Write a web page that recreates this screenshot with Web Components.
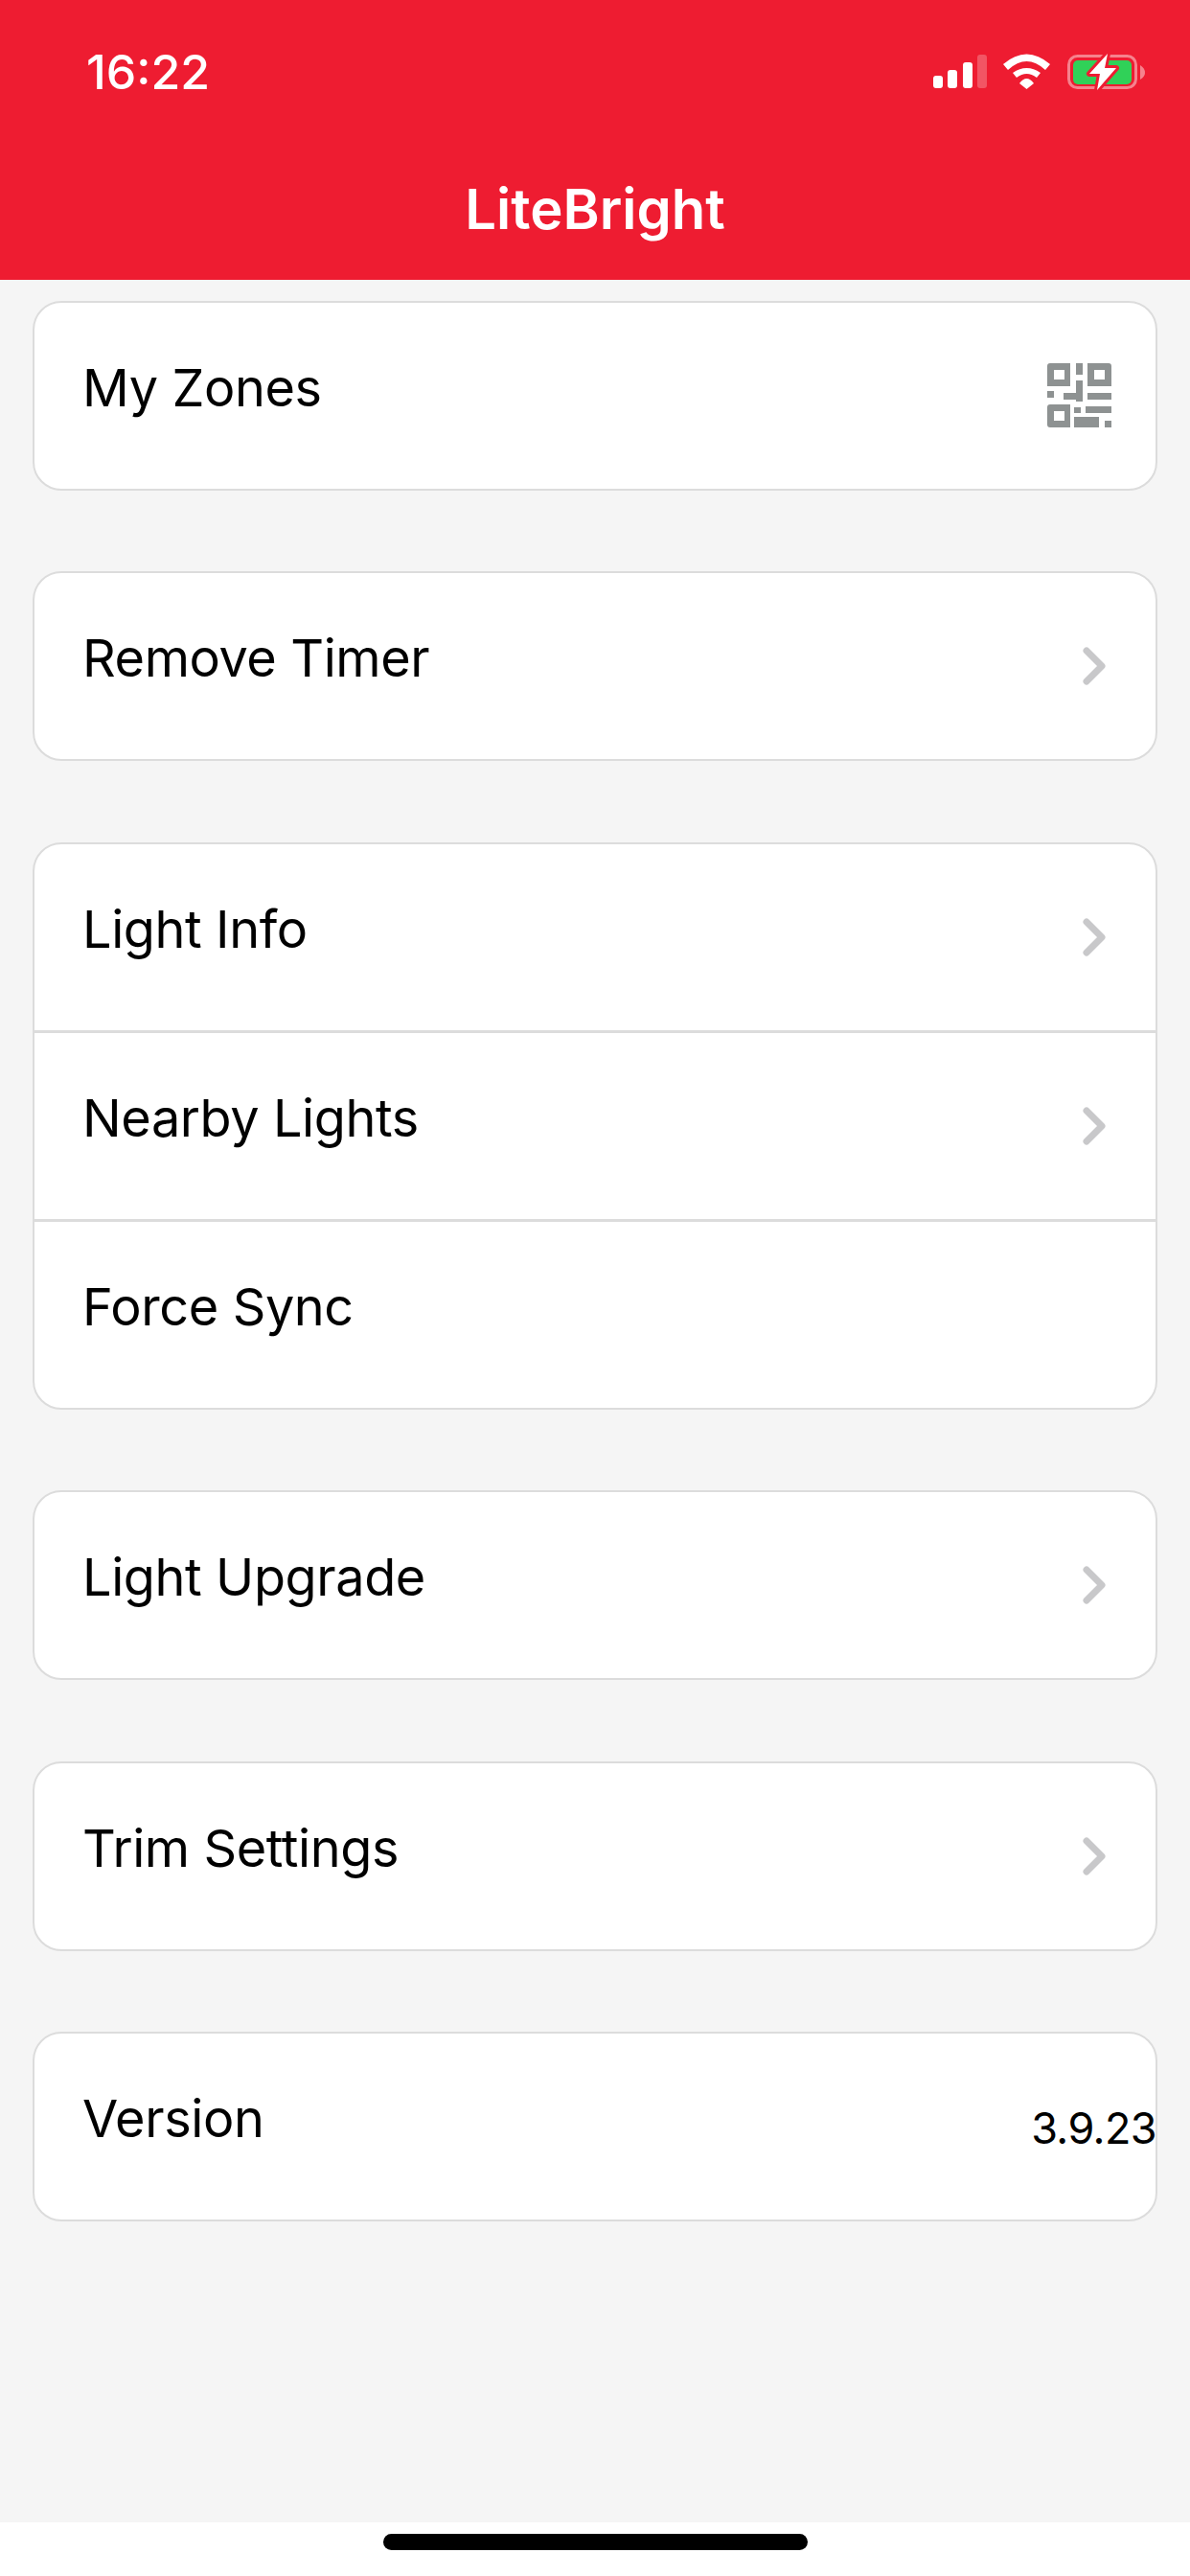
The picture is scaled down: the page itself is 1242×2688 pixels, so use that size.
<!DOCTYPE html>
<html>
<head>
<meta charset="utf-8">
<title>LiteBright</title>
<style>
  html, body { margin: 0; padding: 0; }
  body { font-family: "Inter", "Liberation Sans", sans-serif; background: #f5f5f5; }
</style>
</head>
<body>
<app-screen>
  <app-header title="LiteBright" time="16:22"></app-header>
  <menu-list>
    <menu-card>
      <menu-row label="My Zones" icon="qr"></menu-row>
    </menu-card>
    <menu-card>
      <menu-row label="Remove Timer" icon="chevron"></menu-row>
    </menu-card>
    <menu-card>
      <menu-row label="Light Info" icon="chevron"></menu-row>
      <menu-row label="Nearby Lights" icon="chevron"></menu-row>
      <menu-row label="Force Sync"></menu-row>
    </menu-card>
    <menu-card>
      <menu-row label="Light Upgrade" icon="chevron"></menu-row>
    </menu-card>
    <menu-card>
      <menu-row label="Trim Settings" icon="chevron"></menu-row>
    </menu-card>
    <menu-card>
      <menu-row label="Version" value="3.9.23"></menu-row>
    </menu-card>
  </menu-list>
  <home-bar></home-bar>
</app-screen>

<script>
class AppScreen extends HTMLElement {
  connectedCallback() {
    this.attachShadow({ mode: 'open' });
    this.shadowRoot.innerHTML = `
      <style>
        :host {
          display: flex;
          flex-direction: column;
          height: 2688px;
          overflow: hidden;
          background: #f5f5f5;
        }
      </style>
      <slot></slot>
    `;
  }
}

class AppHeader extends HTMLElement {
  connectedCallback() {
    this.attachShadow({ mode: 'open' });
    this.shadowRoot.innerHTML = `
      <style>
        :host {
          display: block;
          box-sizing: border-box;
          height: 292px;
          background: #ee1c31;
          color: white;
          padding-top: 50px;
        }
        .status {
          display: flex;
          justify-content: space-between;
          align-items: center;
          height: 50px;
          padding: 0 47px 0 90px;
        }
        .time {
          font-size: 50px;
          font-weight: 500;
          line-height: 50px;
        }
        .icons {
          display: flex;
          align-items: center;
        }
        .icons svg { display: block; }
        .title {
          text-align: center;
          font-size: 58px;
          font-weight: 600;
          line-height: 70px;
          margin-top: 83px;
        }
      </style>
      <div class="status">
        <span class="time">${this.getAttribute('time')}</span>
        <div class="icons">
          <svg width="221" height="40" viewBox="974 56 221 40">
            <rect x="974" y="80" width="10" height="13" rx="3" fill="#fff"/>
            <rect x="989" y="74" width="10" height="19" rx="3" fill="#fff"/>
            <rect x="1005" y="66" width="10" height="27" rx="3" fill="#fff"/>
            <rect x="1020" y="58" width="10" height="35" rx="3" fill="#fff" fill-opacity=".25"/>
            <path d="M1047 68 Q1071.5 47 1096 68 L1091 74 Q1071.5 56 1052 74 Z" fill="#fff"/>
            <path d="M1057 77 Q1071.5 67 1086 77 L1082 82 Q1071.5 74 1061 82 Z" fill="#fff"/>
            <path d="M1064 88 Q1071.5 78 1079 88 L1071.5 94 Z" fill="#fff"/>
            <rect x="1115.5" y="59.5" width="70" height="33" rx="9" fill="none" stroke="#fff" stroke-opacity=".45" stroke-width="3"/>
            <rect x="1120" y="64" width="61" height="25" rx="5" fill="#30d158"/>
            <path d="M1190 69 Q1195 72 1195 77 Q1195 81 1190 84 Z" fill="#fff" fill-opacity=".45"/>
            <path d="M1156 57 L1137 78 L1148 78 L1145 95 L1165 72 L1153 72 Z" fill="#fff" stroke="#ee1c31" stroke-width="6" stroke-linejoin="round" paint-order="stroke"/>
          </svg>
        </div>
      </div>
      <div class="title">${this.getAttribute('title')}</div>
    `;
  }
}

class MenuList extends HTMLElement {
  connectedCallback() {
    this.attachShadow({ mode: 'open' });
    this.shadowRoot.innerHTML = `
      <style>
        :host {
          display: flex;
          flex-direction: column;
          flex: 1;
          gap: 84.6px;
          padding: 21.5px 34px 0;
        }
      </style>
      <slot></slot>
    `;
  }
}

class MenuCard extends HTMLElement {
  connectedCallback() {
    this.attachShadow({ mode: 'open' });
    this.shadowRoot.innerHTML = `
      <style>
        :host {
          display: flex;
          flex-direction: column;
          background: white;
          border: 2px solid #dcdcdc;
          border-radius: 30px;
          overflow: hidden;
        }
        ::slotted(menu-row:not(:last-child)) {
          border-bottom: 3px solid #dcdcdc;
        }
      </style>
      <slot></slot>
    `;
  }
}

class MenuRow extends HTMLElement {
  connectedCallback() {
    const icon = this.getAttribute('icon');
    const value = this.getAttribute('value');
    let right = '';
    if (icon === 'chevron') {
      right = `<svg class="chevron" width="26" height="44" viewBox="0 0 26 44"><path d="M6 6 L22 22 L6 38" fill="none" stroke="#c8c8ca" stroke-width="7" stroke-linecap="round" stroke-linejoin="round"/></svg>`;
    } else if (icon === 'qr') {
      right = `<svg class="qr" width="67" height="67" viewBox="0 0 67 67" fill="#8e9292">
        <path fill-rule="evenodd" d="M3 0H24V24H0V3Q0 0 3 0ZM7 7V17H18V7Z"/>
        <rect x="30" y="0" width="7" height="12"/>
        <path fill-rule="evenodd" d="M42 0H64Q67 0 67 3V24H42ZM49 7V17H60V7Z"/>
        <rect x="30" y="18" width="7" height="22"/>
        <rect x="0" y="29" width="7" height="7"/>
        <rect x="17" y="31" width="13" height="7"/>
        <rect x="42" y="31" width="25" height="7"/>
        <path fill-rule="evenodd" d="M0 46Q0 43 3 43H24V67H3Q0 67 0 64ZM7 50V60H18V50Z"/>
        <rect x="28" y="46" width="7" height="6"/>
        <rect x="40" y="45" width="27" height="7"/>
        <rect x="28" y="56" width="26" height="11"/>
        <rect x="60" y="60" width="7" height="7"/>
      </svg>`;
    } else if (value) {
      right = `<span class="value">${value}</span>`;
    }
    this.attachShadow({ mode: 'open' });
    this.shadowRoot.innerHTML = `
      <style>
        :host {
          display: flex;
          height: 194px;
          position: relative;
          color: #000;
        }
        .label {
          font-size: 54px;
          line-height: 65px;
          letter-spacing: -0.4px;
          margin: 56px 0 0 50px;
        }
        .right {
          position: absolute;
          right: 0;
          top: 0;
          bottom: 0;
          display: flex;
          align-items: center;
        }
        .chevron { margin-right: 52px; }
        .qr { margin-right: 46px; }
        .value {
          font-size: 45px;
          letter-spacing: -0.6px;
          margin: 3px -1px 0 0;
        }
      </style>
      <span class="label">${this.getAttribute('label')}</span>
      <div class="right">${right}</div>
    `;
  }
}

class HomeBar extends HTMLElement {
  connectedCallback() {
    this.attachShadow({ mode: 'open' });
    this.shadowRoot.innerHTML = `
      <style>
        :host {
          display: flex;
          justify-content: center;
          box-sizing: border-box;
          height: 56px;
          padding-top: 12px;
          background: white;
        }
        div {
          width: 443px;
          height: 17px;
          border-radius: 9px;
          background: #000;
        }
      </style>
      <div></div>
    `;
  }
}

customElements.define('app-screen', AppScreen);
customElements.define('app-header', AppHeader);
customElements.define('menu-list', MenuList);
customElements.define('menu-card', MenuCard);
customElements.define('menu-row', MenuRow);
customElements.define('home-bar', HomeBar);
</script>
</body>
</html>
